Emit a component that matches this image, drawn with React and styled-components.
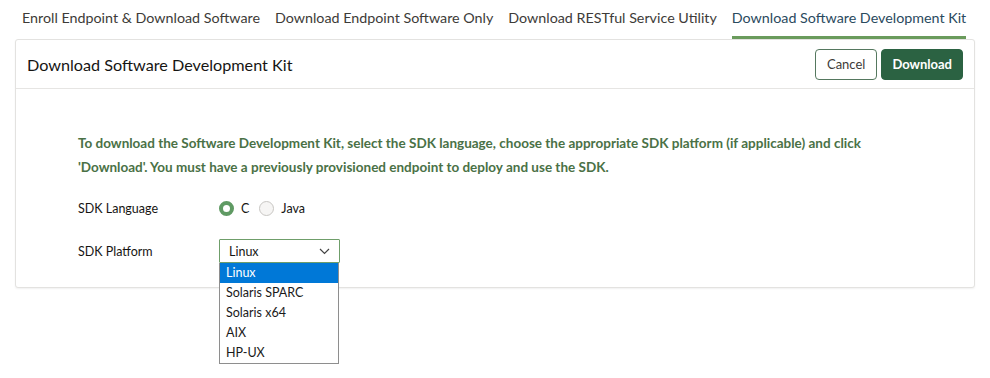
import React, { useState } from "react";
import styled, { createGlobalStyle } from "styled-components";

const GlobalStyle = createGlobalStyle`
  html, body {
    margin: 0;
    padding: 0;
    background: #ffffff;
    font-family: "Lato", "Liberation Sans", sans-serif;
    color: #161513;
  }
`;

const Page = styled.div`
  padding: 0 15px;
  width: 960px;
  min-height: 378px;
`;

const TabBar = styled.ul`
  list-style: none;
  display: flex;
  flex-flow: row nowrap;
  gap: 15px;
  margin: 0;
  padding: 0 0 0 7px;
  height: 39px;
`;

const Tab = styled.li`
  font-size: 14.3px;
  line-height: 36px;
  height: 36px;
  white-space: nowrap;
  color: ${({ active }) => (active ? "#2a4a5e" : "#3d3b38")};
  border-bottom: 3px solid ${({ active }) => (active ? "#6a9b5c" : "transparent")};
  cursor: pointer;
`;

const Card = styled.section`
  border: 1px solid #e3e2e0;
  border-radius: 3px;
  box-shadow: 0 1px 2px rgba(0, 0, 0, 0.06);
  background: #fff;
`;

const CardHeader = styled.header`
  display: flex;
  align-items: center;
  justify-content: space-between;
  height: 48px;
  padding: 0 11px 0 11px;
  border-bottom: 1px solid #e6e5e3;
`;

const Title = styled.h2`
  margin: 0;
  font-size: 16.2px;
  font-weight: 400;
  color: #161513;
`;

const Actions = styled.div`
  display: flex;
  gap: 4px;
`;

const Button = styled.button`
  font-family: inherit;
  font-size: 13px;
  height: 31px;
  padding: 0 ${({ primary }) => (primary ? "10px" : "11px")};
  border-radius: 4px;
  border: 1px solid ${({ primary }) => (primary ? "#2b6242" : "#55785f")};
  background: ${({ primary }) => (primary ? "#2b6242" : "#fff")};
  color: ${({ primary }) => (primary ? "#fff" : "#3d3b38")};
  font-weight: ${({ primary }) => (primary ? 700 : 400)};
  cursor: pointer;
`;

const Body = styled.div`
  padding: 42px 62px 24px;
`;

const Intro = styled.p`
  margin: 0 0 17px;
  font-size: 13.5px;
  font-weight: 700;
  line-height: 24px;
  color: #4a7146;
  max-width: 820px;
`;

const Row = styled.div`
  display: flex;
  align-items: center;
  height: 24px;
  margin-bottom: ${({ gap }) => gap || 0}px;
`;

const Label = styled.span`
  width: 141px;
  font-size: 12.5px;
  color: #161513;
`;

const RadioGroup = styled.div`
  display: flex;
  align-items: center;
  font-size: 12.5px;
`;

const RadioDot = styled.span`
  width: 15px;
  height: 15px;
  box-sizing: border-box;
  border-radius: 50%;
  margin-right: 7px;
  border: ${({ checked }) => (checked ? "4px solid #5f9a63" : "1px solid #c8c6c3")};
  background: ${({ checked }) => (checked ? "#fff" : "#f6f5f4")};
`;

const RadioText = styled.span`
  margin-right: 10px;
`;

const SelectWrap = styled.div`
  position: relative;
  width: 121px;
`;

const SelectBox = styled.div`
  box-sizing: border-box;
  display: flex;
  align-items: center;
  justify-content: space-between;
  height: 24px;
  padding: 0 9px 0 9px;
  border: 1px solid #6f9e6a;
  border-radius: 1px;
  font-size: 12.5px;
  background: #fff;
`;

const Options = styled.ul`
  position: absolute;
  top: 24px;
  left: 0;
  width: 120px;
  box-sizing: border-box;
  list-style: none;
  margin: 0;
  padding: 0;
  border: 1px solid #8e8e8e;
  border-top: none;
  background: #fff;
  z-index: 2;
`;

const Option = styled.li`
  height: 20px;
  line-height: 20px;
  padding: 0 6px;
  font-size: 12.5px;
  background: ${({ selected }) => (selected ? "#0078d7" : "#fff")};
  color: ${({ selected }) => (selected ? "#fff" : "#1a1a1a")};
`;

const platforms = ["Linux", "Solaris SPARC", "Solaris x64", "AIX", "HP-UX"];
const tabs = [
  "Enroll Endpoint & Download Software",
  "Download Endpoint Software Only",
  "Download RESTful Service Utility",
  "Download Software Development Kit",
];

const App = () => {
  const [lang, setLang] = useState("C");

  return (
    <Page>
      <GlobalStyle />
      <TabBar>
        {tabs.map((t, i) => (
          <Tab key={t} active={i === 3}>{t}</Tab>
        ))}
      </TabBar>
      <Card>
        <CardHeader>
          <Title>Download Software Development Kit</Title>
          <Actions>
            <Button>Cancel</Button>
            <Button primary>Download</Button>
          </Actions>
        </CardHeader>
        <Body>
          <Intro>
            To download the Software Development Kit, select the SDK language, choose the appropriate SDK platform (if applicable) and click 'Download'. You must have a previously provisioned endpoint to deploy and use the SDK.
          </Intro>
          <Row gap={19}>
            <Label>SDK Language</Label>
            <RadioGroup>
              <RadioDot checked={lang === "C"} onClick={() => setLang("C")} />
              <RadioText>C</RadioText>
              <RadioDot checked={lang === "Java"} onClick={() => setLang("Java")} />
              <RadioText>Java</RadioText>
            </RadioGroup>
          </Row>
          <Row>
            <Label>SDK Platform</Label>
            <SelectWrap>
              <SelectBox>
                <span>Linux</span>
                <svg width="11" height="7" viewBox="0 0 11 7">
                  <path d="M1 1l4.5 4.5L10 1" fill="none" stroke="#444" strokeWidth="1.2" />
                </svg>
              </SelectBox>
              <Options>
                {platforms.map((p, i) => (
                  <Option key={p} selected={i === 0}>{p}</Option>
                ))}
              </Options>
            </SelectWrap>
          </Row>
        </Body>
      </Card>
    </Page>
  );
};

export default App;
